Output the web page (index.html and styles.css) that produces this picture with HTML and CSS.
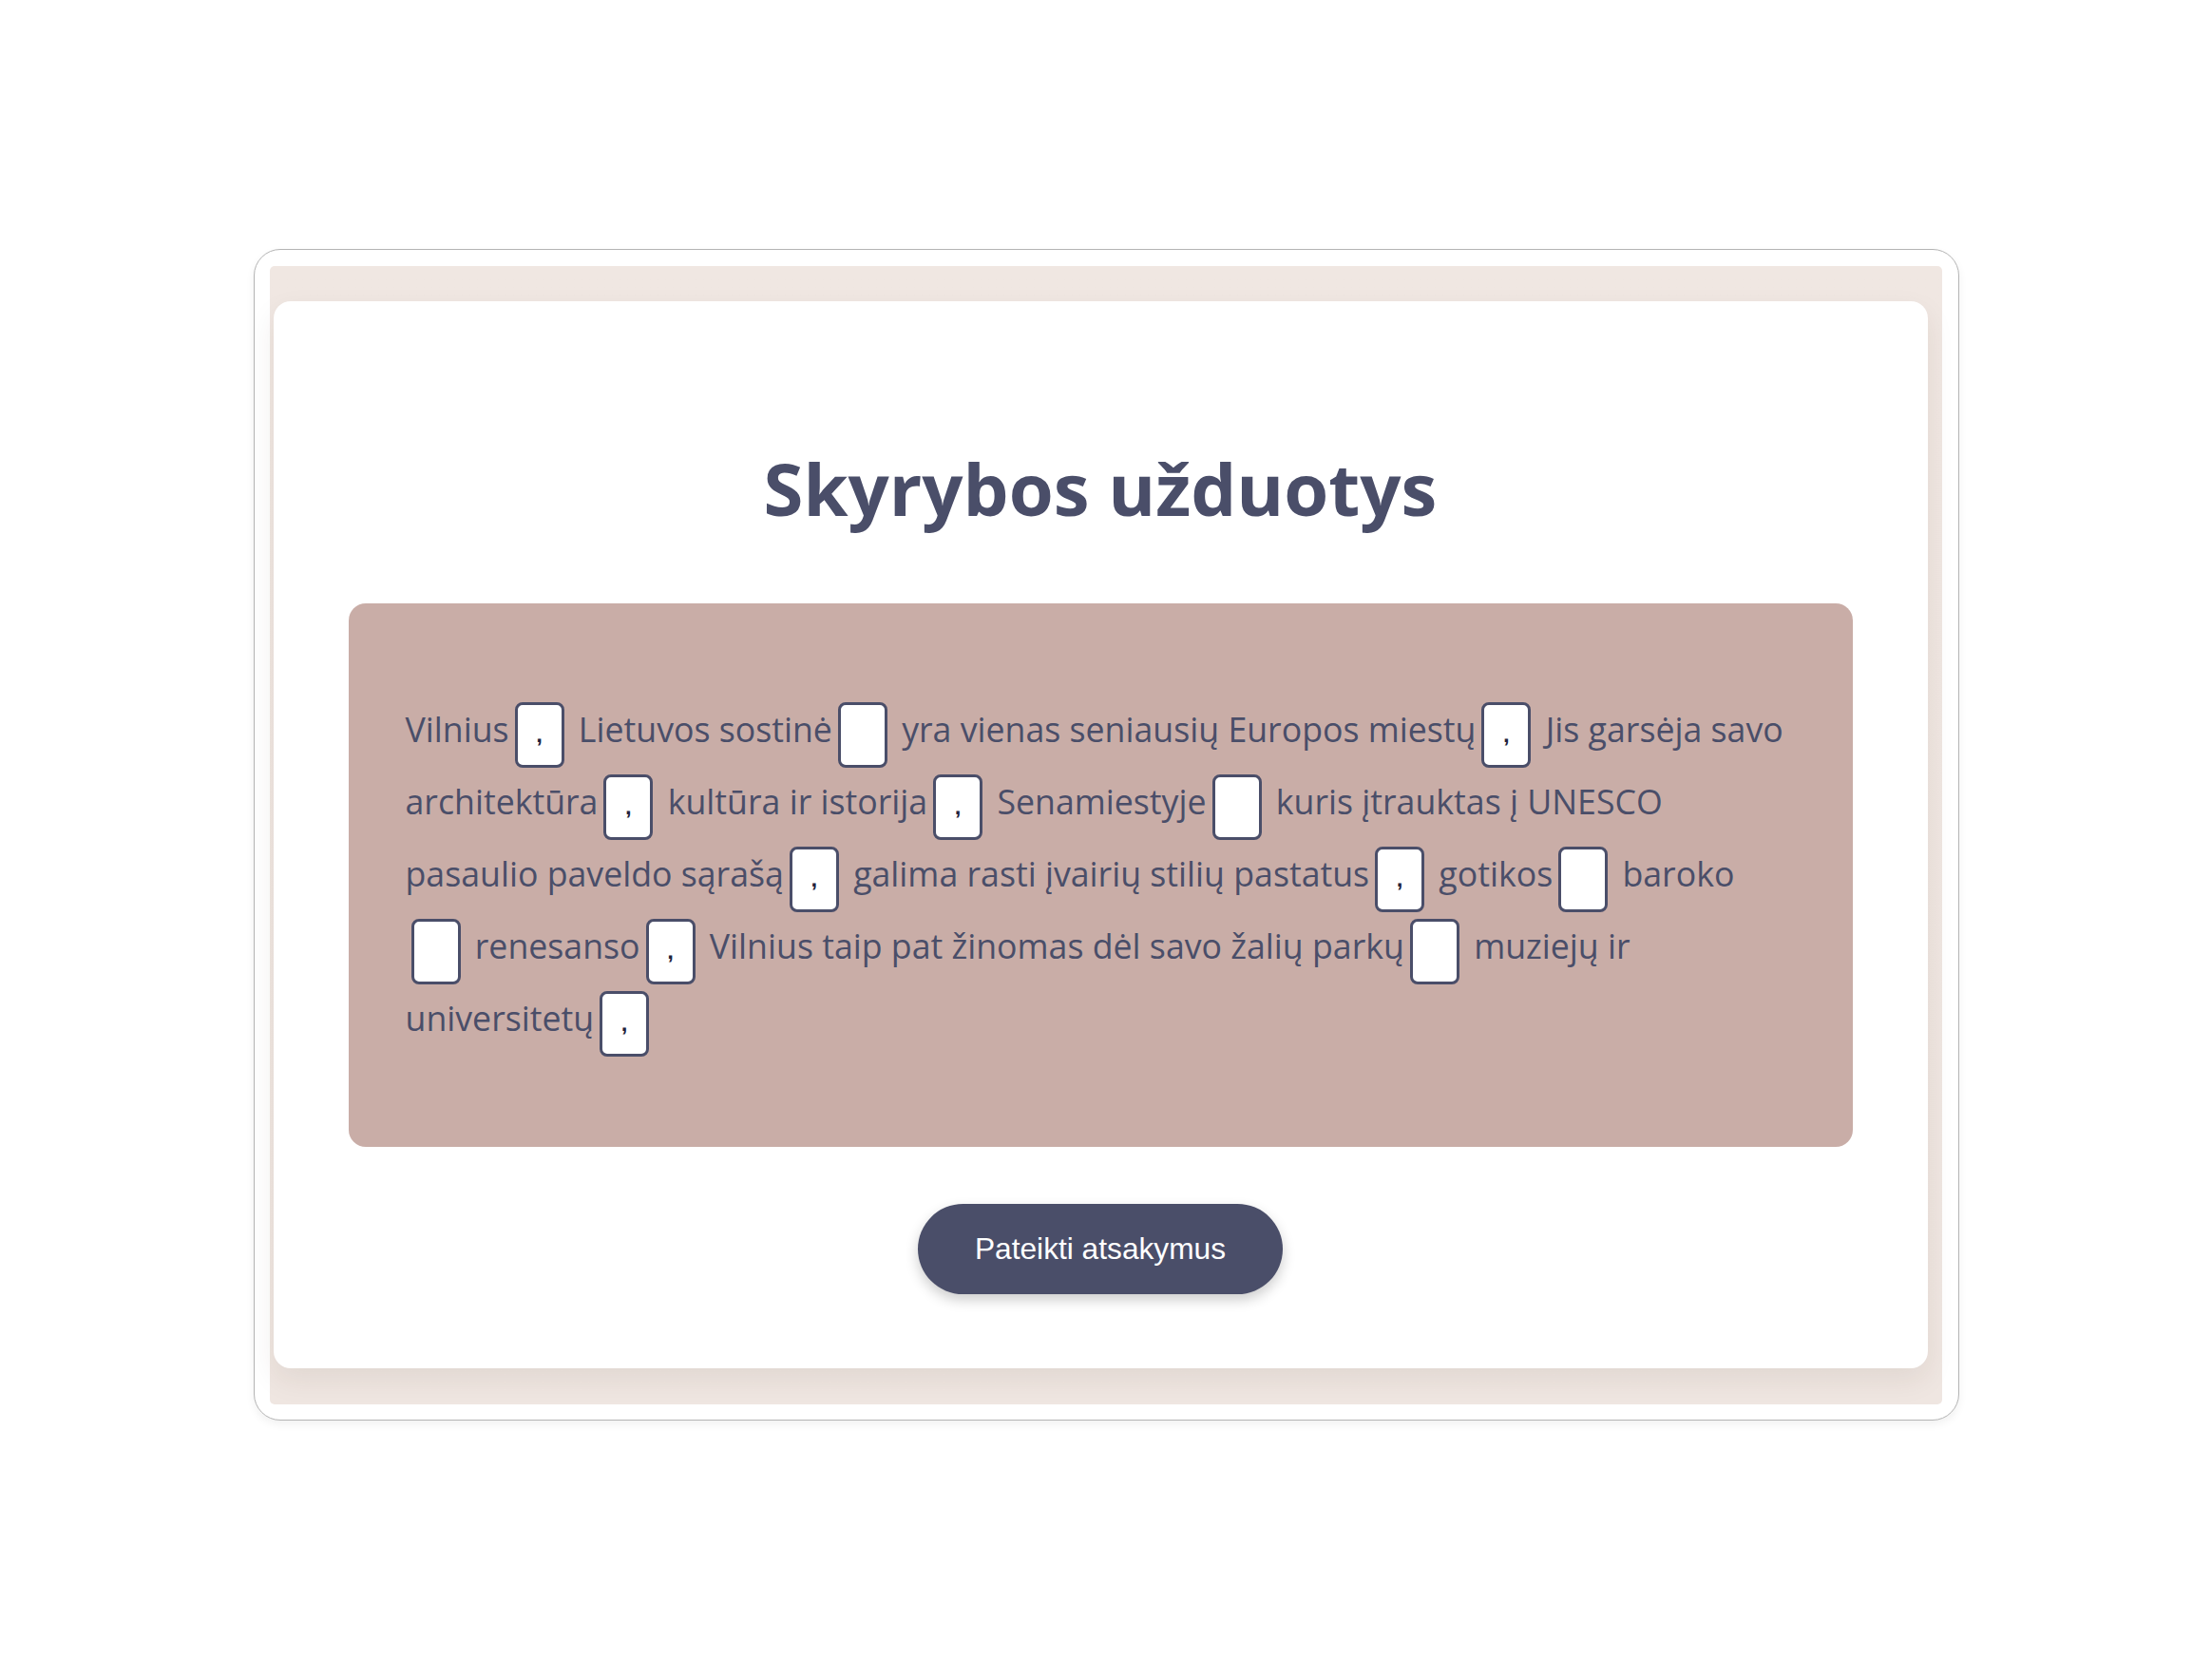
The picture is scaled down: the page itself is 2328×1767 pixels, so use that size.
FILE: index.html
```html
<!DOCTYPE html>
<html lang="lt">
<head>
<meta charset="utf-8">
<title>Skyrybos užduotys</title>
<link rel="stylesheet" href="styles.css">
</head>
<body>
<div class="frame">
  <div class="backdrop">
    <main class="card">
      <h1 class="title">Skyrybos užduotys</h1>
      <section class="exercise">
        <p class="text">Vilnius<input class="gap" type="text" value=","> Lietuvos sostinė<input class="gap" type="text" value=""> yra vienas seniausių Europos miestų<input class="gap" type="text" value=","> Jis garsėja savo architektūra<input class="gap" type="text" value=","> kultūra ir istorija<input class="gap" type="text" value=","> Senamiestyje<input class="gap" type="text" value=""> kuris įtrauktas į UNESCO pasaulio paveldo sąrašą<input class="gap" type="text" value=","> galima rasti įvairių stilių pastatus<input class="gap" type="text" value=","> gotikos<input class="gap" type="text" value=""> baroko<input class="gap" type="text" value=""> renesanso<input class="gap" type="text" value=","> Vilnius taip pat žinomas dėl savo žalių parkų<input class="gap" type="text" value=""> muziejų ir universitetų<input class="gap" type="text" value=","></p>
      </section>
      <button class="submit" type="button">Pateikti atsakymus</button>
    </main>
  </div>
</div>
</body>
</html>
```

FILE: styles.css
```css
html, body {
  margin: 0;
  padding: 0;
  background: #ffffff;
}

body {
  min-height: 100vh;
  display: flex;
  align-items: center;
  justify-content: center;
  padding-bottom: 10px;
  box-sizing: border-box;
  font-family: "Open Sans", "Noto Sans", sans-serif;
}

.frame {
  width: 1795px;
  box-sizing: border-box;
  border: 1px solid #b4b4b4;
  border-radius: 28px;
  padding: 17px 17px 16px 16px;
  background: #ffffff;
  box-shadow: 0 4px 10px rgba(0, 0, 0, 0.06);
}

.backdrop {
  background: linear-gradient(180deg, #f0e7e2 0%, #efe6e1 100%);
  border-radius: 5px;
  padding: 37px 15px 38px 4px;
}

.card {
  background: #ffffff;
  border-radius: 18px;
  padding: 151px 79px 78px;
  display: flex;
  flex-direction: column;
  align-items: center;
  box-shadow: 0 12px 30px rgba(60, 40, 30, 0.08);
}

.title {
  margin: 0 0 76px;
  font-size: 76px;
  line-height: 1.2;
  font-weight: 700;
  color: #4a4e69;
  text-align: center;
}

.exercise {
  align-self: stretch;
  background: #c9ada7;
  border-radius: 18px;
  padding: 60px 69px 60px 60px;
}

.text {
  margin: 40px 0 32px;
  font-size: 35.7px;
  line-height: 1.5;
  color: #4a4e69;
}

.gap {
  width: 52px;
  height: 69px;
  box-sizing: border-box;
  margin: 3.5px 6px;
  padding: 0;
  border: 3px solid #4a4e69;
  border-radius: 8px;
  background: #ffffff;
  color: #22223b;
  font-family: "Liberation Sans", Arial, sans-serif;
  font-size: 24px;
  font-weight: 700;
  text-align: center;
  vertical-align: baseline;
  outline: none;
}

.submit {
  margin-top: 60px;
  padding: 29px 60px;
  border: none;
  border-radius: 50px;
  background: #4a4e69;
  color: #ffffff;
  font-family: "Liberation Sans", Arial, sans-serif;
  font-size: 31.7px;
  line-height: 37px;
  cursor: pointer;
  box-shadow: 0 6px 14px rgba(0, 0, 0, 0.2);
}
```
